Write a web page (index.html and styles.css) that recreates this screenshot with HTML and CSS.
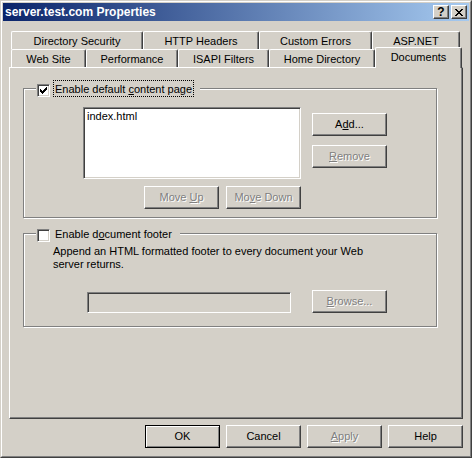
FILE: index.html
```html
<!DOCTYPE html>
<html>
<head>
<meta charset="utf-8">
<title>server.test.com Properties</title>
<link rel="stylesheet" href="styles.css">
</head>
<body>
<div class="window">
  <div class="frame">
    <div class="titlebar">
      <span class="title">server.test.com Properties</span>
      <div class="caption-btns">
        <span class="cap-btn cap-help">?</span>
        <span class="cap-btn cap-close">
          <svg width="8" height="7" viewBox="0 0 8 7" shape-rendering="crispEdges"><path fill="#000" d="M0 0h2v1H0zM6 0h2v1H6zM1 1h2v1H1zM5 1h2v1H5zM2 2h4v1H2zM3 3h2v1H3zM2 4h4v1H2zM1 5h2v1H1zM5 5h2v1H5zM0 6h2v1H0zM6 6h2v1H6z"/></svg>
        </span>
      </div>
    </div>

    <div class="tabs">
      <div class="tabrow">
        <div class="tab t-dirsec">Directory Security</div>
        <div class="tab t-http">HTTP Headers</div>
        <div class="tab t-errors">Custom Errors</div>
        <div class="tab t-aspnet">ASP.NET</div>
      </div>
      <div class="tabrow">
        <div class="tab t-website">Web Site</div>
        <div class="tab t-perf">Performance</div>
        <div class="tab t-isapi">ISAPI Filters</div>
        <div class="tab t-homedir">Home Directory</div>
        <div class="tab t-docs selected">Documents</div>
      </div>
    </div>

    <div class="panel">
      <div class="group g1">
        <div class="legend">
          <span class="checkbox">
            <svg width="11" height="11" viewBox="0 0 11 11" shape-rendering="crispEdges"><path fill="#000" d="M8 2h1v1H8zM7 3h2v1H7zM2 4h1v1H2zM6 4h3v1H6zM2 5h2v1H2zM5 5h3v1H5zM2 6h5v1H2zM3 7h3v1H3zM4 8h1v1H4z"/></svg>
          </span>
          <span class="cblabel focus">Enable default <u>c</u>ontent page</span>
        </div>
        <div class="g1row">
          <div class="listcol">
            <div class="listbox"><div class="item">index.html</div></div>
            <div class="movebtns">
              <button class="btn disabled">Move <u>U</u>p</button>
              <button class="btn disabled">Mo<u>v</u>e Down</button>
            </div>
          </div>
          <div class="sidebtns">
            <button class="btn">A<u>d</u>d...</button>
            <button class="btn disabled"><u>R</u>emove</button>
          </div>
        </div>
      </div>

      <div class="group g2">
        <div class="legend">
          <span class="checkbox"></span>
          <span class="cblabel">Enable d<u>o</u>cument footer</span>
        </div>
        <p class="desc">Append an HTML formatted footer to every document your Web<br>server returns.</p>
        <div class="g2row">
          <div class="textbox"></div>
          <button class="btn disabled"><u>B</u>rowse...</button>
        </div>
      </div>
    </div>

    <div class="dlgbtns">
      <button class="btn default">OK</button>
      <button class="btn">Cancel</button>
      <button class="btn disabled"><u>A</u>pply</button>
      <button class="btn">Help</button>
    </div>
  </div>
</div>
</body>
</html>
```

FILE: styles.css
```css
html, body {
  margin: 0;
  padding: 0;
  background: #d4d0c8;
}

body {
  font: 11px "Liberation Sans", Arial, sans-serif;
  color: #000;
}

.window {
  width: 472px;
  height: 458px;
  box-sizing: border-box;
  border: 1px solid;
  border-color: #d4d0c8 #404040 #404040 #d4d0c8;
  background: #d4d0c8;
}

.frame {
  height: 100%;
  box-sizing: border-box;
  border: 1px solid;
  border-color: #fff #808080 #808080 #fff;
  padding: 1px;
  display: flex;
  flex-direction: column;
}

/* Title bar */
.titlebar {
  height: 18px;
  flex: none;
  display: flex;
  align-items: center;
  padding: 0 2px;
  background: linear-gradient(to right, #0a246a, #a6caf0);
}

.title {
  margin-right: auto;
  color: #fff;
  font-weight: bold;
  font-size: 12px;
  line-height: 18px;
  white-space: nowrap;
}

.caption-btns {
  display: flex;
  gap: 2px;
}

.cap-btn {
  width: 16px;
  height: 14px;
  box-sizing: border-box;
  border: 1px solid;
  border-color: #fff #404040 #404040 #fff;
  box-shadow: inset -1px -1px 0 #808080;
  background: #d4d0c8;
  display: flex;
  align-items: center;
  justify-content: center;
}

.cap-help {
  font-weight: bold;
  font-size: 12px;
  line-height: 12px;
  padding-bottom: 1px;
}

.cap-close svg {
  display: block;
}

/* Tabs */
.tabs {
  margin: 10px 0 0 8px;
  flex: none;
}

.tabrow {
  display: flex;
  height: 18px;
}

.tab {
  box-sizing: border-box;
  height: 18px;
  flex: none;
  border-top: 1px solid #fff;
  border-left: 1px solid #fff;
  border-right: 1px solid #404040;
  box-shadow: inset -1px 0 0 #808080;
  border-radius: 2px 2px 0 0;
  padding-top: 3px;
  line-height: 13px;
  text-align: center;
  white-space: nowrap;
  background: #d4d0c8;
}

.tab.selected {
  height: 21px;
  margin-top: -2px;
  position: relative;
  z-index: 1;
}

.t-dirsec { width: 132px; }
.t-http { width: 116px; }
.t-errors { width: 113px; }
.t-aspnet { width: 88px; }
.t-website { width: 75px; }
.t-perf { width: 92px; }
.t-isapi { width: 91px; }
.t-homedir { width: 106px; }
.t-docs { width: 87px; }

/* Panel */
.panel {
  flex: none;
  margin: 0 6px;
  height: 352px;
  box-sizing: border-box;
  border: 1px solid;
  border-color: #fff #404040 #404040 #fff;
  box-shadow: inset -1px -1px 0 #808080;
  padding: 20px 0 0 13px;
}

.group {
  position: relative;
  width: 414px;
  box-sizing: border-box;
  border: 1px solid #808080;
  box-shadow: inset 1px 1px 0 #fff, 1px 1px 0 #fff;
}

.g1 {
  height: 130px;
  padding: 18px 0 0 59px;
}

.g2 {
  margin-top: 15px;
  height: 94px;
  padding: 11px 0 0 29px;
}

.legend {
  position: absolute;
  top: -9px;
  left: 12px;
  height: 17px;
  display: flex;
  align-items: flex-start;
  padding: 0 6px 0 1px;
  background: #d4d0c8;
}

.checkbox {
  width: 13px;
  height: 13px;
  margin-top: 4px;
  box-sizing: border-box;
  border: 1px solid;
  border-color: #808080 #fff #fff #808080;
  box-shadow: inset 1px 1px 0 #404040, inset -1px -1px 0 #d4d0c8;
  background: #fff;
}

.checkbox svg {
  display: block;
}

.cblabel {
  margin-left: 3px;
  border: 1px dotted transparent;
  padding: 2px 1px 0 1px;
  line-height: 13px;
  white-space: nowrap;
}

.cblabel.focus {
  border-color: #000;
}

.g1row {
  display: flex;
  gap: 11px;
}

.listcol {
  width: 218px;
}

.listbox {
  height: 72px;
  box-sizing: border-box;
  border: 1px solid;
  border-color: #808080 #fff #fff #808080;
  box-shadow: inset 1px 1px 0 #404040, inset -1px -1px 0 #d4d0c8;
  background: #fff;
  padding: 2px 3px;
}

.item {
  line-height: 13px;
}

.movebtns {
  display: flex;
  justify-content: flex-end;
  gap: 7px;
  margin-top: 7px;
}

.sidebtns {
  display: flex;
  flex-direction: column;
  gap: 9px;
  margin-top: 6px;
}

.desc {
  margin: 0;
  line-height: 13px;
}

.g2row {
  display: flex;
  align-items: flex-start;
  gap: 21px;
  margin: 19px 0 0 34px;
}

.textbox {
  width: 204px;
  height: 21px;
  margin-top: 2px;
  box-sizing: border-box;
  border: 1px solid;
  border-color: #808080 #fff #fff #808080;
  box-shadow: inset 1px 1px 0 #404040, inset -1px -1px 0 #d4d0c8;
  background: #d4d0c8;
}

/* Buttons */
.btn {
  width: 75px;
  height: 23px;
  flex: none;
  box-sizing: border-box;
  margin: 0;
  padding: 0;
  border: 1px solid;
  border-color: #fff #404040 #404040 #fff;
  box-shadow: inset -1px -1px 0 #808080;
  background: #d4d0c8;
  font: 11px "Liberation Sans", Arial, sans-serif;
  line-height: 21px;
  color: #000;
  text-align: center;
  white-space: nowrap;
}

.btn.default {
  border-color: #000;
  box-shadow: inset 1px 1px 0 #fff, inset -1px -1px 0 #808080;
}

.btn.disabled {
  color: #808080;
  text-shadow: 1px 1px 0 #fff;
}

.dlgbtns {
  flex: none;
  display: flex;
  justify-content: flex-end;
  gap: 6px;
  margin: 6px 6px 0 0;
}
```
